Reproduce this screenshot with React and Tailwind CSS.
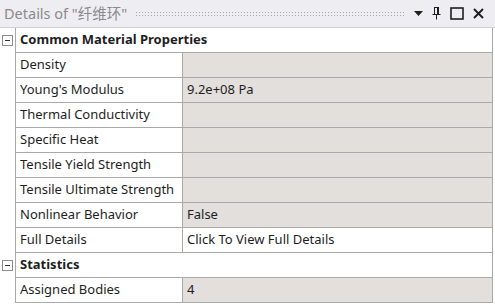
const rows = [
  { type: 'group', label: 'Common Material Properties' },
  { label: 'Density', value: '', fill: true },
  { label: "Young's Modulus", value: '9.2e+08 Pa', fill: true },
  { label: 'Thermal Conductivity', value: '', fill: true },
  { label: 'Specific Heat', value: '', fill: true },
  { label: 'Tensile Yield Strength', value: '', fill: true },
  { label: 'Tensile Ultimate Strength', value: '', fill: true },
  { label: 'Nonlinear Behavior', value: 'False', fill: true },
  { label: 'Full Details', value: 'Click To View Full Details', fill: false },
  { type: 'group', label: 'Statistics' },
  { label: 'Assigned Bodies', value: '4', fill: true },
];

function MinusBox() {
  return (
    <svg width="11" height="11" viewBox="0 0 11 11">
      <rect x="0.5" y="0.5" width="10" height="10" fill="#fff" stroke="#8c8c8c" />
      <path d="M3 5.5h5" stroke="#333" strokeWidth="1" />
    </svg>
  );
}

export default function App() {
  return (
    <div className="w-[495px] h-[308px] bg-white overflow-hidden text-[13px] text-[#1e1e1e]" style={{ fontFamily: '"Noto Sans", "Noto Sans CJK SC", sans-serif' }}>
      {/* Title bar */}
      <div className="h-[28px] bg-[#eeeef2] border-b border-[#cccedb] flex items-center pl-[4px] pr-[11px]">
        <span className="text-[#8a8a8a] text-[14.5px] whitespace-nowrap">Details of "纤维环"</span>
        <div
          className="flex-1 h-[5px] ml-[8px] mr-[10px]"
          style={{ backgroundImage: 'radial-gradient(circle, #a8a8b0 0.6px, transparent 0.9px)', backgroundSize: '3px 3px' }}
        />
        <div className="flex items-center gap-[9px] text-[#1e1e1e]">
          <svg width="9" height="6" viewBox="0 0 9 6"><path d="M0 0h9L4.5 5z" fill="#1e1e1e" /></svg>
          <svg width="9" height="13" viewBox="0 0 9 13">
            <path d="M2 0.5h5M2.5 0.5v7M6.5 0.5v7M5.5 0.5v7M0.5 7.5h8M4.5 7.5v5" stroke="#1e1e1e" strokeWidth="1" fill="none" />
          </svg>
          <svg width="14" height="13" viewBox="0 0 14 13"><rect x="1" y="1" width="12" height="11" fill="none" stroke="#1e1e1e" strokeWidth="1.6" /></svg>
          <svg width="11" height="11" viewBox="0 0 11 11"><path d="M1 1l9 9M10 1l-9 9" stroke="#1e1e1e" strokeWidth="1.9" /></svg>
        </div>
      </div>

      {/* Property grid */}
      <div className="w-[493px] border-r border-[#a9a9a9]">
        {rows.map((r, i) => (
          <div key={i} className="flex h-[25px]">
            <div className="w-[16px] flex items-center justify-center border-r border-[#a9a9a9] shrink-0">
              {r.type === 'group' && <MinusBox />}
            </div>
            {r.type === 'group' ? (
              <div className="flex-1 flex items-center pl-[4px] font-bold border-b border-[#a9a9a9]">{r.label}</div>
            ) : (
              <>
                <div className="w-[167px] shrink-0 flex items-center pl-[4px] border-b border-r border-[#a9a9a9] whitespace-nowrap">{r.label}</div>
                <div className={`flex-1 flex items-center pl-[4px] border-b border-[#a9a9a9] whitespace-nowrap ${r.fill ? 'bg-[#e2dfdc]' : 'bg-white'}`}>{r.value}</div>
              </>
            )}
          </div>
        ))}
      </div>
    </div>
  );
}
